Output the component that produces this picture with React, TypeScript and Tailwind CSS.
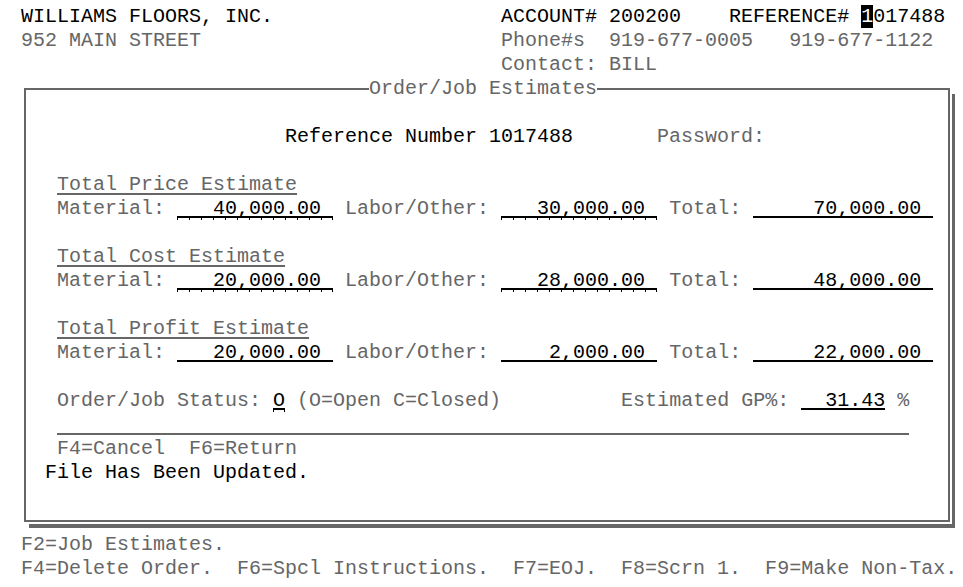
import React from 'react';

const GRAY = 'text-[#666]';

function Row({ children }: { children?: React.ReactNode }) {
  return <div className="h-6 leading-6 whitespace-pre">{children}</div>;
}

// input field: black value with underline, optional 5250-style column ticks
function Field({ text, ticks }: { text: string; ticks?: boolean }) {
  return (
    <span className="relative inline-block h-6 align-top text-black">
      {text}
      <span className="absolute left-0 right-0 top-[19px] h-[2px] bg-black" />
      {ticks && (
        <span className="absolute left-0 right-0 top-[21px] h-[2px] border-r border-black bg-[repeating-linear-gradient(to_right,#000_0_1px,transparent_1px_12px)]" />
      )}
    </span>
  );
}

function Estimate({ title, mat, lab, tot, ticks }: { title: string; mat: string; lab: string; tot: string; ticks?: boolean }) {
  return (
    <>
      <Row>
        <span className={GRAY}>{'  '}</span>
        <span className={`${GRAY} underline underline-offset-[3px] decoration-[#666] decoration-2`}>{title}</span>
      </Row>
      <Row>
        <span className={GRAY}>{'  Material: '}</span>
        <Field text={mat} ticks={ticks} />
        <span className={GRAY}>{' Labor/Other: '}</span>
        <Field text={lab} ticks={ticks} />
        <span className={GRAY}>{' Total: '}</span>
        <Field text={tot} />
      </Row>
    </>
  );
}

export default function App() {
  return (
    <div className="w-[963px] h-[587px] overflow-hidden bg-white pt-[5px] font-['Liberation_Mono',monospace] text-[20px]">
      {/* header */}
      <div className="pl-[9px]">
        <Row>
          <span className="text-black">{' WILLIAMS FLOORS, INC.                   ACCOUNT# 200200    REFERENCE# '}</span>
          <span className="bg-black text-white">1</span>
          <span className="text-black">017488</span>
        </Row>
        <Row>
          <span className={GRAY}>{' 952 MAIN STREET                         Phone#s  919-677-0005   919-677-1122'}</span>
        </Row>
        <Row>
          <span className={GRAY}>{'                                         Contact: BILL'}</span>
        </Row>
      </div>

      {/* window */}
      <div className="relative mt-[11px] ml-6 w-[926px] border-2 border-[#666] pl-[7px] pt-[11px] pb-[11px] shadow-[2px_2px_0_0_#fff,5px_6px_0_0_#666]">
        <div className={`absolute top-[-13px] left-[343px] h-6 leading-6 whitespace-pre bg-white ${GRAY}`}>Order/Job Estimates</div>

        <Row />
        <Row>
          <span className="text-black">{'                     Reference Number 1017488'}</span>
          <span className={GRAY}>{'       Password:'}</span>
        </Row>
        <Row />
        <Estimate title="Total Price Estimate" mat="   40,000.00 " lab="   30,000.00 " tot="     70,000.00 " ticks />
        <Row />
        <Estimate title="Total Cost Estimate" mat="   20,000.00 " lab="   28,000.00 " tot="     48,000.00 " ticks />
        <Row />
        <Estimate title="Total Profit Estimate" mat="   20,000.00 " lab="    2,000.00 " tot="     22,000.00 " />
        <Row />
        <Row>
          <span className={GRAY}>{'  Order/Job Status: '}</span>
          <Field text="O" ticks />
          <span className={GRAY}>{' (O=Open C=Closed)          Estimated GP%: '}</span>
          <Field text="  31.43" />
          <span className={GRAY}>{' %'}</span>
        </Row>
        <div className="h-6 pt-[20px]">
          <div className="ml-6 h-[2px] w-[852px] bg-[#666]" />
        </div>
        <Row>
          <span className={GRAY}>{'  F4=Cancel  F6=Return'}</span>
        </Row>
        <Row>
          <span className="text-black">{' File Has Been Updated.'}</span>
        </Row>
        <Row />
      </div>

      {/* function keys */}
      <div className={`mt-[11px] pl-[9px] ${GRAY}`}>
        <Row>{' F2=Job Estimates.'}</Row>
        <Row>{' F4=Delete Order.  F6=Spcl Instructions.  F7=EOJ.  F8=Scrn 1.  F9=Make Non-Tax.'}</Row>
      </div>
    </div>
  );
}
